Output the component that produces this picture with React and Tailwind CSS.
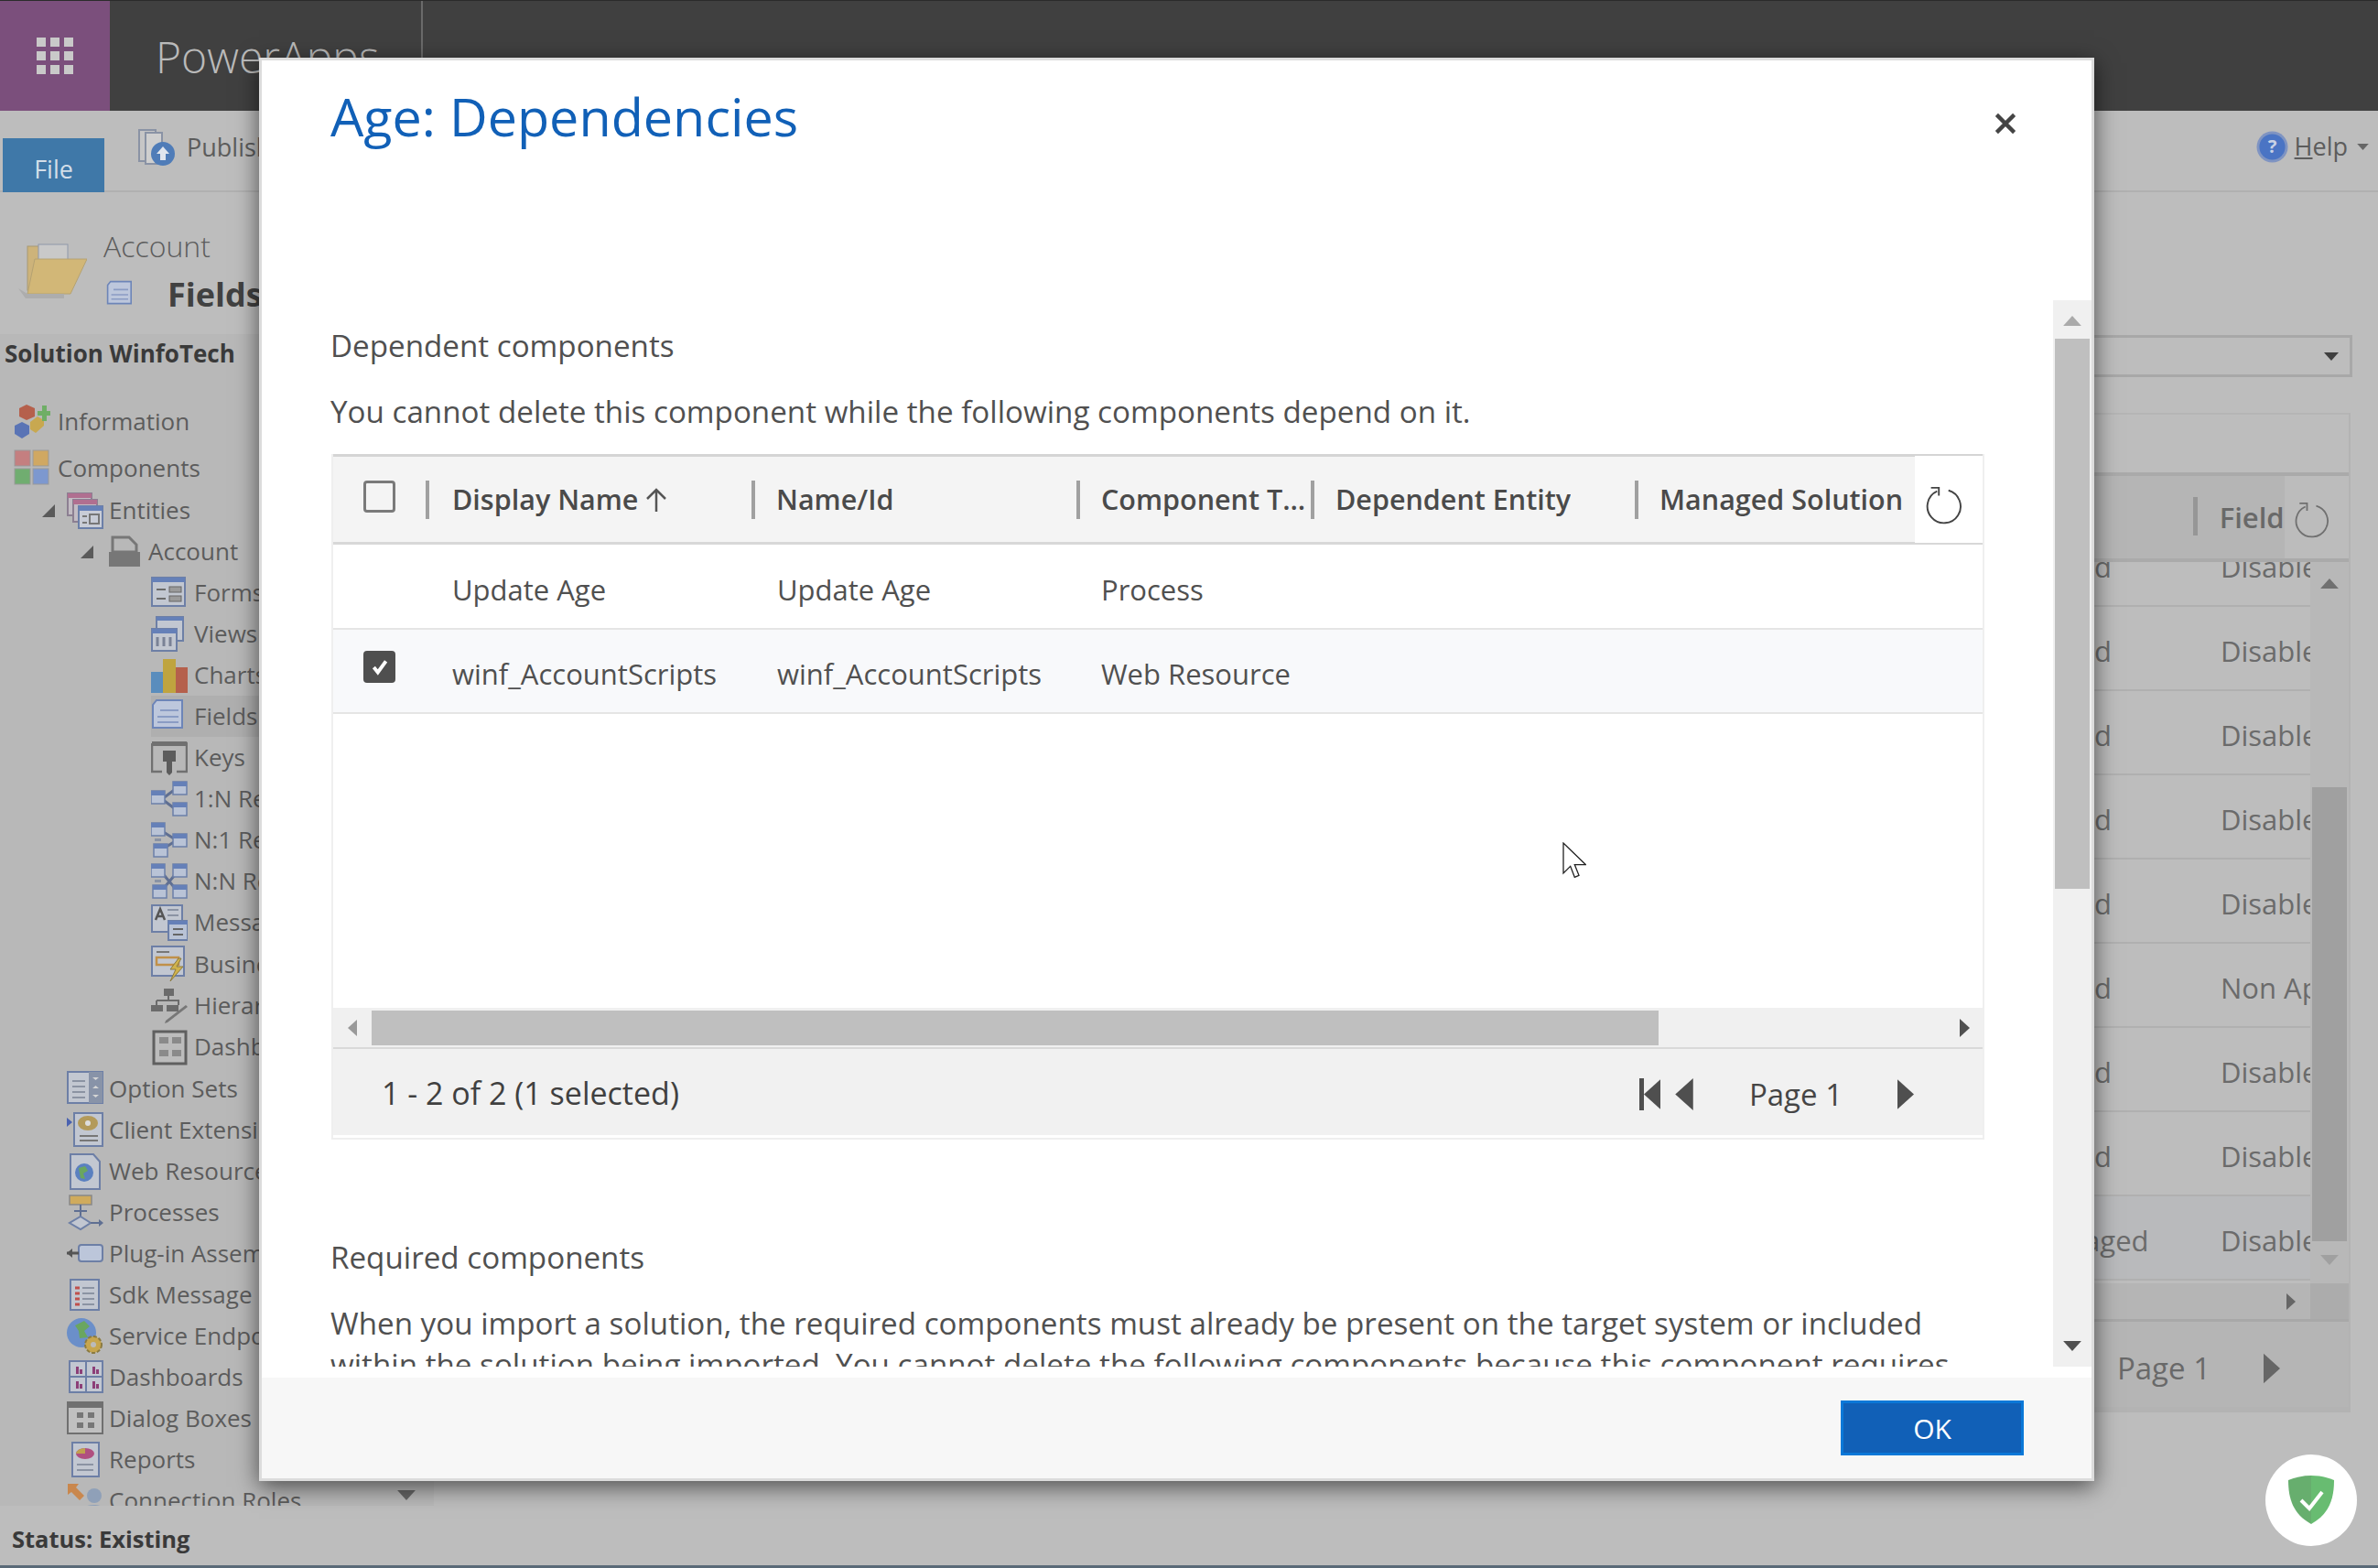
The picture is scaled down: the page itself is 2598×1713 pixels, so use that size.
import React from 'react';

const gridCols = 'grid grid-cols-[101px_356px_355px_256px_354px_306px_74px]';

const Ico = ({ children, className = 'w-[40px] h-[40px]' }) => (
  <svg viewBox="0 0 40 40" className={`${className} shrink-0`}>{children}</svg>
);

const Lines = ({ x = 6, y = 12, w = 24, n = 4, gap = 6, stroke = '#8b93a3' }) => (
  <>
    {Array.from({ length: n }).map((_, i) => (
      <path key={i} d={`M${x} ${y + i * gap}h${w}`} stroke={stroke} strokeWidth="2" />
    ))}
  </>
);

const Rel = ({ d }) => (
  <>
    <path d={d} stroke="#5f6f92" strokeWidth="3" fill="none" />
  </>
);
const Box = ({ x, y }) => (
  <g>
    <rect x={x} y={y} width="15" height="14" fill="#b9c3d6" stroke="#6b7fa8" strokeWidth="1.5" />
    <rect x={x} y={y} width="15" height="5" fill="#6580b8" />
    <rect x={x + 4} y={y + 8} width="7" height="3" fill="#8a93a5" />
  </g>
);

const icons = {
  information: (
    <Ico>
      <path d="M14 1l9 4v9l-9 4-8-4V5z" fill="#b5604c" />
      <path d="M9 20l8 4v9l-8 5-8-5v-9z" fill="#5a74b5" />
      <path d="M26 14l7 4v6l-9 8-6-4v-8z" fill="#c8a850" />
      <path d="M26 8h5V2h5v6h4v5h-4v6h-5v-6h-5z" fill="#6fae66" />
    </Ico>
  ),
  components: (
    <Ico>
      <rect x="1" y="1" width="17" height="17" fill="#c47f80" stroke="#999" />
      <rect x="21" y="1" width="17" height="17" fill="#d0a862" stroke="#999" />
      <rect x="1" y="21" width="17" height="17" fill="#70ad70" stroke="#999" />
      <rect x="21" y="21" width="17" height="17" fill="#7d98cf" stroke="#999" />
    </Ico>
  ),
  entities: (
    <Ico>
      <rect x="1" y="1" width="26" height="24" fill="#c3bcc4" stroke="#8c7f92" strokeWidth="2" />
      <rect x="1" y="1" width="26" height="5" fill="#b06f90" />
      <rect x="7" y="8" width="26" height="24" fill="#c3bcc4" stroke="#8c7f92" strokeWidth="2" />
      <rect x="7" y="8" width="26" height="5" fill="#b06f90" />
      <rect x="13" y="15" width="26" height="24" fill="#c8ccd6" stroke="#6b7fa8" strokeWidth="2" />
      <rect x="13" y="15" width="26" height="5" fill="#6580b8" />
      <path d="M17 26h5M17 33h5" stroke="#777" strokeWidth="2" />
      <rect x="25" y="24" width="10" height="10" fill="none" stroke="#777" strokeWidth="2" />
    </Ico>
  ),
  account: (
    <Ico>
      <path d="M6 4h18l8 8v8H6z" fill="none" stroke="#777" strokeWidth="3" />
      <path d="M2 20h34v16H2z" fill="#777" />
    </Ico>
  ),
  forms: (
    <Ico>
      <rect x="1" y="3" width="36" height="31" fill="#c2c7d1" stroke="#6d7fa6" strokeWidth="2" />
      <rect x="1" y="3" width="36" height="5" fill="#6580b8" />
      <path d="M6 16h10M6 26h10" stroke="#6b6b6b" strokeWidth="2" />
      <rect x="20" y="13" width="13" height="6" fill="#9a9a9a" stroke="#666" />
      <rect x="20" y="23" width="13" height="6" fill="#9a9a9a" stroke="#666" />
    </Ico>
  ),
  views: (
    <Ico>
      <rect x="6" y="1" width="29" height="26" fill="#c2c7d1" stroke="#6d7fa6" strokeWidth="2" />
      <rect x="6" y="1" width="29" height="4" fill="#6580b8" />
      <rect x="1" y="14" width="27" height="24" fill="#c2c7d1" stroke="#6d7fa6" strokeWidth="2" />
      <rect x="1" y="14" width="27" height="5" fill="#6580b8" />
      <path d="M7 23v10M14 23v10M21 23v10" stroke="#7a8296" strokeWidth="3" />
    </Ico>
  ),
  charts: (
    <Ico>
      <rect x="0" y="16" width="13" height="23" fill="#5a8dbd" />
      <rect x="13" y="2" width="14" height="37" fill="#bfa43f" />
      <rect x="27" y="11" width="13" height="28" fill="#b5604c" />
    </Ico>
  ),
  fields: (
    <Ico>
      <path d="M6 2h28v30H2V7z" fill="#bdc7dc" stroke="#6d85b8" strokeWidth="2" />
      <path d="M10 13h20M7 20h23M7 26h23" stroke="#8a9cc4" strokeWidth="2" />
    </Ico>
  ),
  keys: (
    <Ico>
      <path d="M1 4h38v31h-11M12 35H1V4" fill="none" stroke="#707070" strokeWidth="2.5" />
      <rect x="1" y="2" width="38" height="5" fill="#707070" />
      <path d="M13 12h14v12h-4v12l-3 3-3-3V24h-4z" fill="#5c5c5c" />
    </Ico>
  ),
  oneN: (
    <Ico>
      <Rel d="M12 20L28 8M12 20l16 12" />
      <Box x="0" y="11" />
      <Box x="24" y="1" />
      <Box x="24" y="24" />
    </Ico>
  ),
  nOne: (
    <Ico>
      <Rel d="M12 10l16 10M12 30l16-10" />
      <Box x="0" y="1" />
      <Box x="3" y="24" />
      <Box x="24" y="13" />
    </Ico>
  ),
  nN: (
    <Ico>
      <Rel d="M10 8l20 24M30 8L10 32" />
      <Box x="0" y="1" />
      <Box x="24" y="1" />
      <Box x="2" y="24" />
      <Box x="24" y="24" />
    </Ico>
  ),
  message: (
    <Ico>
      <rect x="1" y="1" width="33" height="29" fill="#c2c7d1" stroke="#6d7fa6" strokeWidth="2" />
      <path d="M5 17l5-12 5 12M7 13h6" stroke="#555" strokeWidth="2.5" fill="none" />
      <Lines x={18} y={6} w={12} n={2} gap={6} />
      <rect x="19" y="18" width="21" height="21" fill="#b9c3d6" stroke="#6b7fa8" strokeWidth="2" />
      <rect x="19" y="18" width="21" height="4" fill="#6580b8" />
      <path d="M24 27h11M24 33h11" stroke="#666" strokeWidth="2" />
    </Ico>
  ),
  business: (
    <Ico>
      <rect x="1" y="1" width="35" height="32" fill="#c2c7d1" stroke="#6d7fa6" strokeWidth="2" />
      <path d="M6 7h14" stroke="#777" strokeWidth="2" />
      <rect x="6" y="13" width="24" height="8" fill="none" stroke="#c0904a" strokeWidth="2.5" />
      <path d="M30 14l-9 12h6l-6 13 14-16h-7l5-9z" fill="#d0b24c" stroke="#8a7a40" />
    </Ico>
  ),
  hierarchy: (
    <Ico>
      <rect x="14" y="1" width="11" height="8" fill="#6b6b6b" />
      <path d="M19 9v5M6 14h24v5M6 14v5" stroke="#6b6b6b" strokeWidth="2" fill="none" />
      <rect x="0" y="19" width="13" height="7" fill="#6b6b6b" />
      <rect x="17" y="19" width="13" height="7" fill="#6b6b6b" />
      <path d="M38 19l2 2-22 17-3 1 1-3z" fill="#777" />
    </Ico>
  ),
  dash: (
    <Ico>
      <rect x="3" y="3" width="35" height="35" fill="#bcbcbc" stroke="#5f5f5f" strokeWidth="3" />
      <rect x="9" y="9" width="10" height="7" fill="#8a8a8a" />
      <rect x="23" y="9" width="10" height="7" fill="#8a8a8a" />
      <rect x="9" y="23" width="10" height="7" fill="#8a8a8a" />
      <rect x="23" y="23" width="10" height="7" fill="#8a8a8a" />
    </Ico>
  ),
  optionSets: (
    <Ico>
      <rect x="1" y="2" width="38" height="34" fill="#c2c7d1" stroke="#6d7fa6" strokeWidth="2" />
      <rect x="24" y="2" width="15" height="34" fill="#8893a8" />
      <path d="M6 12h14M6 18h14M6 24h14M6 30h14" stroke="#8b93a3" strokeWidth="2" />
      <path d="M28 8h7l-3.500 3zM28 20l3.500-3 3.500 3zM28 27h7l-3.500 3z" fill="#d5d5d5" />
    </Ico>
  ),
  client: (
    <Ico>
      <path d="M0 6l6 5-6 5z" fill="#4a62b0" />
      <rect x="8" y="1" width="31" height="36" fill="#c2c7d1" stroke="#6d7fa6" strokeWidth="2" />
      <ellipse cx="23" cy="12" rx="11" ry="8" fill="#b39a5a" />
      <circle cx="23" cy="12" r="3" fill="#ddd" />
      <path d="M14 26h20M14 31h20" stroke="#777" strokeWidth="2" />
    </Ico>
  ),
  web: (
    <Ico>
      <path d="M4 1h25l7 8v30H4z" fill="#c2c7d1" stroke="#6d7fa6" strokeWidth="2" />
      <circle cx="19" cy="21" r="10" fill="#5a80c0" />
      <path d="M13 16l7-2 3 5-5 3 2 6-5-1z" fill="#6aa65f" />
    </Ico>
  ),
  processes: (
    <Ico>
      <rect x="3" y="1" width="24" height="10" fill="#d0ab5c" stroke="#888" strokeWidth="1.5" />
      <path d="M15 11v14M8 18h14" stroke="#5f6f92" strokeWidth="2" />
      <path d="M15 24l11 7-11 7-12-7z" fill="#c2c7d1" stroke="#6d7fa6" strokeWidth="2" />
      <path d="M26 31h11" stroke="#5f6f92" strokeWidth="2" />
      <path d="M35 27l5 4-5 4z" fill="#5f6f92" />
    </Ico>
  ),
  plugin: (
    <Ico>
      <rect x="13" y="10" width="26" height="18" rx="3" fill="#bcc6da" stroke="#6d7fa6" strokeWidth="2" />
      <path d="M0 19h13" stroke="#555" strokeWidth="3" />
      <path d="M6 14v10l-6-5z" fill="#555" />
    </Ico>
  ),
  sdk: (
    <Ico>
      <rect x="4" y="3" width="31" height="33" fill="#c2c7d1" stroke="#6d7fa6" strokeWidth="2" />
      <path d="M9 12h5M9 18h5M9 24h5M9 30h5" stroke="#c0504d" strokeWidth="3" />
      <path d="M17 12h13M17 18h13M17 24h13M17 30h13" stroke="#8b93a3" strokeWidth="2" />
    </Ico>
  ),
  service: (
    <Ico>
      <circle cx="16" cy="16" r="16" fill="#6b8fc9" />
      <path d="M9 8l10-5 6 6-6 5 4 7-9 1-1-8z" fill="#6aa65f" />
      <circle cx="29" cy="29" r="9" fill="#c7a64e" stroke="#8a7a40" strokeWidth="2" strokeDasharray="4 2" />
      <circle cx="29" cy="29" r="3" fill="#bbb" />
    </Ico>
  ),
  dashboards: (
    <Ico>
      <rect x="3" y="2" width="36" height="34" fill="#c2c7d1" stroke="#6d7fa6" strokeWidth="2" />
      <path d="M21 2v34M3 19h36" stroke="#6d7fa6" strokeWidth="2" />
      <path d="M10 8h3v8h-3zM14 11h3v5h-3zM28 8h3v8h-3zM32 11h3v5h-3zM10 24h3v8h-3zM14 27h3v5h-3zM28 24h3v8h-3zM32 27h3v5h-3z" fill="#8c3f78" />
    </Ico>
  ),
  dialog: (
    <Ico>
      <rect x="1" y="2" width="38" height="34" fill="#c0c0c0" stroke="#707070" strokeWidth="2" />
      <rect x="1" y="2" width="38" height="6" fill="#707070" />
      <rect x="11" y="13" width="7" height="6" fill="#777" />
      <rect x="23" y="13" width="7" height="6" fill="#777" />
      <rect x="11" y="24" width="7" height="6" fill="#777" />
      <rect x="23" y="24" width="7" height="6" fill="#777" />
    </Ico>
  ),
  reports: (
    <Ico>
      <rect x="6" y="1" width="29" height="37" fill="#c2c7d1" stroke="#6d7fa6" strokeWidth="2" />
      <ellipse cx="20" cy="13" rx="10" ry="6" fill="#b04f80" />
      <path d="M10 13a10 6 0 0 1 10-6v6z" fill="#c0a050" />
      <path d="M11 25h18M11 31h18" stroke="#8b93a3" strokeWidth="2" />
    </Ico>
  ),
  connection: (
    <Ico>
      <path d="M1 1h12l-3 4 9 9-5 5-9-9-4 3z" fill="#c9874d" />
      <circle cx="30" cy="14" r="8" fill="#8fa0b8" />
      <path d="M16 30c2-8 26-8 24 0v8H16z" fill="#8fa0b8" />
    </Ico>
  ),
};

const navItems = [
  { label: 'Information', icon: 'information', cls: 'pl-[15px] h-[53px] gap-[8px]' },
  { label: 'Components', icon: 'components', cls: 'pl-[15px] h-[48px] gap-[8px]' },
  { label: 'Entities', icon: 'entities', tri: true, cls: 'pl-[46px] h-[45px] gap-[6px]', triGap: 'mr-[7px]' },
  { label: 'Account', icon: 'account', tri: true, cls: 'pl-[88px] h-[45px] gap-[5px]', triGap: 'mr-[10px]' },
  { label: 'Forms', icon: 'forms', cls: 'ml-[165px] h-[45px] gap-[7px]' },
  { label: 'Views', icon: 'views', cls: 'ml-[165px] h-[45px] gap-[7px]' },
  { label: 'Charts', icon: 'charts', cls: 'ml-[165px] h-[45px] gap-[7px]' },
  { label: 'Fields', icon: 'fields', cls: 'ml-[165px] h-[45px] gap-[7px] bg-[#afafaf]' },
  { label: 'Keys', icon: 'keys', cls: 'ml-[165px] h-[45px] gap-[7px]' },
  { label: '1:N Relationships', icon: 'oneN', cls: 'ml-[165px] h-[45px] gap-[7px]' },
  { label: 'N:1 Relationships', icon: 'nOne', cls: 'ml-[165px] h-[45px] gap-[7px]' },
  { label: 'N:N Relationships', icon: 'nN', cls: 'ml-[165px] h-[45px] gap-[7px]' },
  { label: 'Messages', icon: 'message', cls: 'ml-[165px] h-[45px] gap-[7px]' },
  { label: 'Business Rules', icon: 'business', cls: 'ml-[165px] h-[46px] gap-[7px]' },
  { label: 'Hierarchy Settings', icon: 'hierarchy', cls: 'ml-[165px] h-[45px] gap-[7px]' },
  { label: 'Dashboards', icon: 'dash', cls: 'ml-[165px] h-[45px] gap-[7px]' },
  { label: 'Option Sets', icon: 'optionSets', cls: 'pl-[73px] h-[46px] gap-[6px]' },
  { label: 'Client Extensions', icon: 'client', cls: 'pl-[73px] h-[45px] gap-[6px]' },
  { label: 'Web Resources', icon: 'web', cls: 'pl-[73px] h-[45px] gap-[6px]' },
  { label: 'Processes', icon: 'processes', cls: 'pl-[73px] h-[45px] gap-[6px]' },
  { label: 'Plug-in Assemblies', icon: 'plugin', cls: 'pl-[73px] h-[45px] gap-[6px]' },
  { label: 'Sdk Message Processing', icon: 'sdk', cls: 'pl-[73px] h-[45px] gap-[6px]' },
  { label: 'Service Endpoints', icon: 'service', cls: 'pl-[73px] h-[45px] gap-[6px]' },
  { label: 'Dashboards', icon: 'dashboards', cls: 'pl-[73px] h-[45px] gap-[6px]' },
  { label: 'Dialog Boxes', icon: 'dialog', cls: 'pl-[73px] h-[45px] gap-[6px]' },
  { label: 'Reports', icon: 'reports', cls: 'pl-[73px] h-[45px] gap-[6px]' },
  { label: 'Connection Roles', icon: 'connection', cls: 'pl-[73px] h-[45px] gap-[6px]' },
];

const bgRows = [
  ['Added', 'Disabled'],
  ['Added', 'Disabled'],
  ['Added', 'Disabled'],
  ['Added', 'Disabled'],
  ['Added', 'Disabled'],
  ['Added', 'Non Applicable'],
  ['Added', 'Disabled'],
  ['Added', 'Disabled'],
  ['Managed', 'Disabled'],
];

const Refresh = ({ className, stroke }) => (
  <svg viewBox="0 0 44 44" className={className} fill="none" stroke={stroke} strokeWidth="2">
    <path d="M28 5A19 19 0 1 1 15 6" />
    <path d="M8 2h9v9" />
  </svg>
);

const Tri = ({ dir, className, fill }) => {
  const pts = { up: '0,10 9,0 18,10', down: '0,0 18,0 9,10', left: '10,0 10,18 0,9', right: '0,0 10,9 0,18' }[dir];
  const box = dir === 'up' || dir === 'down' ? '0 0 18 10' : '0 0 10 18';
  return (
    <svg viewBox={box} className={className} fill={fill}>
      <polygon points={pts} />
    </svg>
  );
};

const NavList = () => (
  <div className="relative flex-1 overflow-hidden text-[26px] text-[#5c5c5c] bg-[#b8b8b8]">
    {navItems.map((item, i) => (
      <div key={i} className={`flex items-center whitespace-nowrap ${item.cls}`}>
        {item.tri && (
          <svg viewBox="0 0 14 14" className={`w-[14px] h-[14px] shrink-0 ${item.triGap}`}>
            <polygon points="14,0 14,14 0,14" fill="#5a5a5a" />
          </svg>
        )}
        {icons[item.icon]}
        <span>{item.label}</span>
      </div>
    ))}
    <Tri dir="down" fill="#666" className="absolute right-[19px] bottom-[6px] w-[22px] h-[11px]" />
  </div>
);

const BackgroundPage = () => (
  <div className="flex flex-col w-[2598px] h-[1713px] bg-[#bdbdbd]">
    <header className="flex h-[121px] bg-[#404040] border-t border-[#2b2b2b] shrink-0">
      <div className="flex items-center justify-center w-[120px] bg-[#7b4f7c]">
        <div className="grid grid-cols-3 gap-[5px]">
          {Array.from({ length: 9 }).map((_, i) => (
            <span key={i} className="w-[10px] h-[10px] bg-[#c9c9c9]" />
          ))}
        </div>
      </div>
      <div className="w-[342px] border-r-2 border-[#6a6a6a] pl-[50px] pt-[31px] text-[48px] leading-[60px] font-light text-[#bababa]">
        PowerApps
      </div>
    </header>

    <div className="flex h-[89px] shrink-0 border-b-2 border-[#b0b0b0] text-[27px] text-[#5c5c5c]">
      <div className="flex items-center justify-center w-[111px] h-[59px] ml-[3px] mt-[30px] pt-[9px] bg-[#3f78a8] text-[#d3dee8]">File</div>
      <div className="flex items-start gap-[13px] ml-[37px] mt-[20px]">
        <svg viewBox="0 0 40 40" className="w-[40px] h-[40px]">
          <rect x="1" y="1" width="18" height="34" fill="#c6c6c6" stroke="#8a93a5" strokeWidth="2" />
          <rect x="8" y="4" width="18" height="34" fill="#cfcfcf" stroke="#8a93a5" strokeWidth="2" />
          <circle cx="27" cy="27" r="13" fill="#4f7cb8" />
          <path d="M27 19l7 8h-4v7h-6v-7h-4z" fill="#dfe5ee" />
        </svg>
        <span className="leading-[40px]">Publish</span>
      </div>
      <div className="flex items-center gap-[7px] ml-auto h-[78px] pr-[10px]">
        <svg viewBox="0 0 36 36" className="w-[35px] h-[35px]">
          <circle cx="18" cy="18" r="17.500" fill="#7f94c2" />
          <circle cx="18" cy="18" r="14.500" fill="#4a74c4" />
          <text x="18" y="25" textAnchor="middle" fontSize="21" fontWeight="700" fill="#c8d2e6" fontFamily="'Open Sans', sans-serif">?</text>
        </svg>
        <span><span className="underline">H</span>elp</span>
        <Tri dir="down" fill="#666" className="w-[13px] h-[7px] ml-[3px]" />
      </div>
    </div>

    <div className="flex flex-1 min-h-0">
      <aside className="flex flex-col w-[474px] shrink-0">
        <div className="flex h-[155px] shrink-0 pl-[20px] pt-[55px]">
          <svg viewBox="0 0 75 65" className="w-[75px] h-[65px] shrink-0">
            <rect x="10" y="4" width="30" height="48" fill="#cdb37a" stroke="#a89a74" />
            <rect x="22" y="2" width="32" height="22" fill="#c9c9c9" stroke="#8f98aa" />
            <path d="M18 18h57L57 56H10z" fill="#d2b777" stroke="#b5a272" />
            <path d="M0 50l10 6h40v5H8z" fill="#adadad" />
          </svg>
          <div className="flex flex-col ml-[18px] -mt-[18px]">
            <span className="text-[32px] leading-[44px] font-light text-[#5c5c5c]">Account</span>
            <div className="flex items-center gap-[35px] mt-[9px] ml-[3px]">
              <Ico className="w-[32px] h-[32px]">{icons.fields.props.children}</Ico>
              <span className="text-[36px] leading-[44px] font-bold text-[#414141]">Fields</span>
            </div>
          </div>
        </div>
        <div className="h-[69px] shrink-0 pl-[5px] pt-[2px] bg-[#b8b8b8] text-[26px] leading-[38px] font-bold text-[#3a3a3a]">Solution WinfoTech</div>
        <NavList />
      </aside>

      <main className="flex-1 min-w-0 flex flex-col pt-[156px] pr-[28px] text-[#666]">
        <div className="flex items-center justify-end h-[46px] border-[3px] border-[#a8a8a8] pr-[12px]">
          <Tri dir="down" fill="#3f3f3f" className="w-[16px] h-[15px]" />
        </div>
        <div className="flex flex-col mt-[39px] mr-[2px] border-x-2 border-b-[6px] border-[#b3b3b3]">
          <div className="h-[65px] border-t-2 border-[#b5b5b5]" />
          <div className="flex h-[98px] border-t-4 border-b-4 border-[#aaaaaa] bg-[#b5b5b5]">
            <div className="w-[1920px] shrink-0" />
            <div className="w-[5px] h-[42px] mt-[23px] bg-[#969696]" />
            <div className="flex-1 flex items-center bg-[#b5b5b5] pl-[24px] text-[31px] font-semibold text-[#696969]">Field</div>
            <div className="flex items-center justify-center w-[75px] pr-[12px] bg-[#bcbcbc]">
              <Refresh className="w-[40px] h-[40px] mt-[6px]" stroke="#707070" />
            </div>
          </div>
          <div className="flex h-[788px]">
            <div className="flex-1 min-w-0 overflow-hidden">
              <div className="-mt-[43px]">
                {bgRows.map((r, i) => (
                  <div key={i} className={`grid grid-cols-[1737px_213px_100px] h-[92px] items-center pt-[6px] border-b-2 border-[#b0b0b0] text-[31px] text-[#6b6b6b] whitespace-nowrap overflow-hidden ${i === 8 ? 'bg-[#b9babc]' : ''}`}>
                    <span />
                    <span>{r[0]}</span>
                    <span className="overflow-hidden">{r[1]}</span>
                  </div>
                ))}
              </div>
            </div>
            <div className="flex flex-col w-[42px] shrink-0 bg-[#b8b8b8] px-[2px] items-center">
              <Tri dir="up" fill="#707070" className="w-[20px] h-[11px] mt-[18px]" />
              <div className="w-[38px] h-[496px] mt-[217px] bg-[#a0a0a0]" />
              <Tri dir="down" fill="#a0a0a0" className="w-[20px] h-[11px] mt-[15px]" />
            </div>
          </div>
          <div className="flex items-center justify-end h-[42px] bg-[#b5b5b5] border-b-[3px] border-[#a8a8a8]">
            <Tri dir="right" fill="#666" className="w-[10px] h-[20px] mr-[16px]" />
            <div className="w-[42px] h-full bg-[#acacac]" />
          </div>
          <div className="flex items-center justify-end h-[93px] bg-[#b5b5b5] pt-[8px] pr-[75px] text-[33px] font-medium text-[#696969]">
            <span className="mr-[58px]">Page 1</span>
            <Tri dir="right" fill="#666" className="w-[18px] h-[34px]" />
          </div>
        </div>
      </main>
    </div>

    <footer className="flex items-center h-[68px] shrink-0 pl-[13px] pt-[7px] border-b-[3px] border-[#5a6a78] text-[25.500px] font-bold text-[#3a3a3a]">
      Status: Existing
    </footer>
  </div>
);

const DependencyTable = () => (
  <div className="flex flex-col w-[1806px] ml-px border-x-2 border-b-2 border-[#efefef] text-[31px] text-[#505050]">
    <div className={`${gridCols} h-[99px] bg-[#f4f4f4] border-y-[3px] border-t-[#d5d5d5] border-b-[#d8d8d8] text-[30.500px] font-semibold text-[#4a4a4a]`}>
      <div className="flex items-center pl-[33px] pb-[6px]">
        <span className="w-[35px] h-[35px] rounded-[4px] border-[3px] border-[#7a7a7a]" />
      </div>
      <div className="flex items-center">
        <span className="w-[4px] h-[42px] bg-[#a0a0a0]" />
        <span className="ml-[25px]">Display Name</span>
        <svg viewBox="0 0 24 26" className="w-[24px] h-[26px] ml-[8px]" fill="none" stroke="#555" strokeWidth="2.5">
          <path d="M12 26V2M2 12L12 2l10 10" />
        </svg>
      </div>
      {['Name/Id', 'Component Type', 'Dependent Entity', 'Managed Solution'].map((h) => (
        <div key={h} className="flex items-center min-w-0">
          <span className="w-[4px] h-[42px] shrink-0 bg-[#a0a0a0]" />
          <span className="ml-[23px] truncate">{h}</span>
        </div>
      ))}
      <div className="flex items-center justify-center pr-[12px] bg-white -my-[1px]">
        <Refresh className="w-[42px] h-[42px] mt-[12px]" stroke="#444" />
      </div>
    </div>

    <div className={`${gridCols} h-[93px] items-center pt-[7px] border-b-2 border-[#e5e5e5]`}>
      <span />
      <span className="pl-[29px]">Update Age</span>
      <span className="pl-[28px]">Update Age</span>
      <span className="pl-[27px]">Process</span>
    </div>
    <div className={`${gridCols} h-[92px] items-center pt-[6px] bg-[#f8f9fb] border-b-2 border-[#e5e5e5]`}>
      <div className="flex pl-[33px] pb-[15px]">
        <span className="flex items-center justify-center w-[35px] h-[35px] rounded-[4px] bg-[#4f4f4f]">
          <svg viewBox="0 0 20 20" className="w-[22px] h-[22px]" fill="none" stroke="#fff" strokeWidth="3.500">
            <path d="M4 10l4 5 8-11" />
          </svg>
        </span>
      </div>
      <span className="pl-[29px]">winf_AccountScripts</span>
      <span className="pl-[28px]">winf_AccountScripts</span>
      <span className="pl-[27px]">Web Resource</span>
    </div>

    <div className="h-[321px]" />

    <div className="flex items-center h-[45px] bg-[#f0f0f0] border-b-2 border-[#d9d9d9]">
      <Tri dir="left" fill="#999" className="w-[10px] h-[20px] ml-[16px]" />
      <div className="w-[1406px] h-[38px] ml-[16px] bg-[#bfbfbf]" />
      <Tri dir="right" fill="#505050" className="w-[11px] h-[20px] ml-auto mr-[14px]" />
    </div>

    <div className="flex items-center h-[94px] bg-[#f1f1f1] pl-[53px] pt-[3px] text-[33px] font-medium text-[#404040]">
      <span className="text-[34px]">1 - 2 of 2 (1 selected)</span>
      <div className="flex items-center ml-auto pt-[2px]">
        <span className="w-[5px] h-[35px] bg-[#4f4f4f]" />
        <Tri dir="left" fill="#4f4f4f" className="w-[18px] h-[35px]" />
        <Tri dir="left" fill="#4f4f4f" className="w-[20px] h-[35px] ml-[16px]" />
        <span className="ml-[61px] text-[#454545]">Page 1</span>
        <Tri dir="right" fill="#4f4f4f" className="w-[18px] h-[35px] ml-[60px] mr-[75px]" />
      </div>
    </div>
    <div className="h-[3px] bg-white" />
  </div>
);

const DependenciesModal = () => (
  <div className="absolute left-[283px] top-[63px] flex flex-col w-[2005px] h-[1555px] border-[3px] border-[#dcdcdc] bg-white shadow-[0_6px_24px_rgba(0,0,0,0.6)]">
    <div className="flex justify-between h-[262px] shrink-0 pl-[75px] pr-[82px] pt-[23px]">
      <h1 className="text-[57.500px] leading-[76px] text-[#1160b7]">Age: Dependencies</h1>
      <svg viewBox="0 0 20 20" className="w-[24px] h-[24px] mt-[34px]" fill="none" stroke="#444" strokeWidth="3.600">
        <path d="M2 2l16 16M18 2L2 18" />
      </svg>
    </div>

    <div className="flex h-[1165px] shrink-0">
      <div className="flex-1 min-w-0 overflow-hidden pl-[75px] pt-[27px] text-[33.200px] leading-[45px] text-[#505050]">
        <p>Dependent components</p>
        <p className="mt-[27px] mb-[24px]">You cannot delete this component while the following components depend on it.</p>
        <DependencyTable />
        <p className="mt-[106px]">Required components</p>
        <p className="mt-[27px] w-[1800px]">
          When you import a solution, the required components must already be present on the target system or included within the solution being imported. You cannot delete the following components because this component requires
        </p>
      </div>
      <div className="flex flex-col items-center w-[42px] shrink-0 bg-[#f0f0f0]">
        <Tri dir="up" fill="#aaaaaa" className="w-[20px] h-[11px] mt-[17px]" />
        <div className="w-[38px] h-[601px] mt-[14px] bg-[#bfbfbf]" />
        <Tri dir="down" fill="#505050" className="w-[20px] h-[11px] mt-[494px]" />
      </div>
    </div>

    <div className="h-[12px] shrink-0" />
    <div className="flex justify-end flex-1 bg-[#f7f7f7] pt-[25px] pr-[74px]">
      <button className="w-[200px] h-[60px] border-[3px] border-[#0a78d8] bg-[#1160b7] text-[30px] text-white">OK</button>
    </div>
  </div>
);

const App = () => (
  <div className="relative w-[2598px] h-[1713px] overflow-hidden font-['Open_Sans',sans-serif]">
    <BackgroundPage />
    <DependenciesModal />

    {/* mouse pointer */}
    <svg viewBox="0 0 26 40" className="absolute left-[1707px] top-[920px] w-[26px] h-[40px]" fill="#fff" stroke="#222" strokeWidth="1.300">
      <path d="M1 1v33l7.700-7.700 4.600 12 4.700-2-4.700-11.700h12z" />
    </svg>

    {/* adblock badge */}
    <div className="absolute left-[2475px] top-[1589px] flex items-center justify-center w-[100px] h-[100px] rounded-full bg-white">
      <svg viewBox="0 0 50 54" className="w-[50px] h-[54px]">
        <path d="M25 0C16 0 7 2 0 5c0 20 5 37 25 48z" fill="#67ae6e" />
        <path d="M25 0c9 0 18 2 25 5 0 20-5 37-25 48z" fill="#68bc71" />
        <path d="M14 27l9 9 14-18" fill="none" stroke="#fff" strokeWidth="4" />
      </svg>
    </div>
  </div>
);

export default App;
